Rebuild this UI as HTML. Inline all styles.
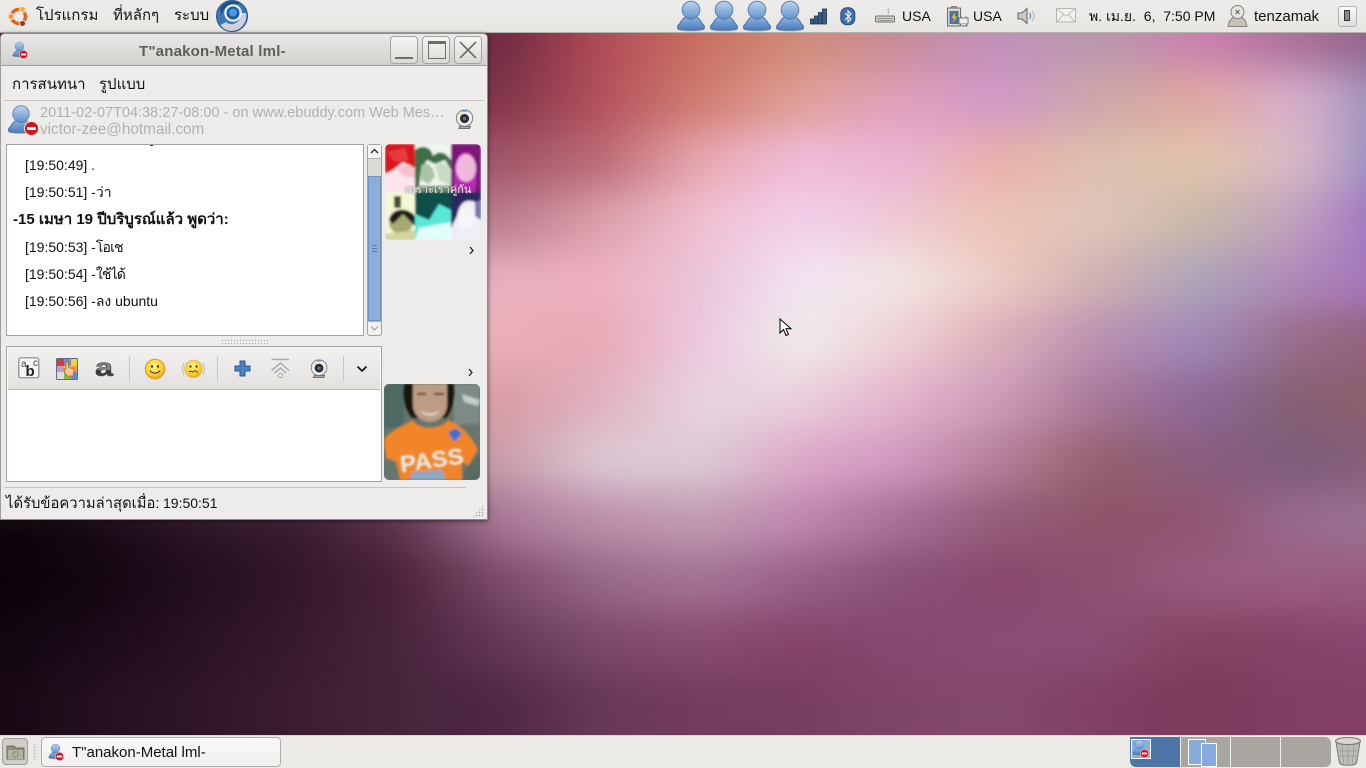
<!DOCTYPE html>
<html lang="th"><head><meta charset="utf-8"><title>T"anakon-Metal lml-</title>
<style>
html,body{margin:0;padding:0;width:1366px;height:768px;overflow:hidden;background:#8a4a70}
body{position:relative;font-family:"Liberation Sans","Noto Sans CJK JP","DejaVu Sans",sans-serif;color:#111;font-size:14px}
.a{position:absolute}
.t{position:absolute;white-space:pre;line-height:18px}
svg{position:absolute;display:block}
#wall{left:0;top:0;width:1366px;height:768px;overflow:hidden;contain:strict;background:linear-gradient(90deg,#180814 0px,#24101e,#301628,#3c1c30,#48243c,#4e2844,#683858,#743c5e,#783e60,#804668,#844a6c,#804064,#7c3a5c,#823e64,#843e64 1400px)}
#wi{position:absolute;left:-100px;top:-100px;width:1600px;height:868px;overflow:visible;filter:blur(20px)}
#wi div{position:absolute;left:0;width:1600px;height:60px}
#top{left:0;top:0;width:1366px;height:32px;background:linear-gradient(#edecea,#e8e6e3);border-bottom:1px solid #b5b2ad}
#bot{left:0;top:735px;width:1366px;height:33px;background:#eceae7;border-top:1px solid #d8d6d2;box-sizing:border-box}
#win{left:0;top:33px;width:488px;height:487px;background:#edeceb;border:1px solid #8d8b88;border-left-color:#a09e9b;box-sizing:border-box;border-radius:5px 5px 0 0;box-shadow:0 1px 5px rgba(0,0,0,.55)}
.btn{position:absolute;top:36px;width:26px;height:26px;border:1px solid #a5a29e;border-radius:4px;background:linear-gradient(#f6f5f4,#dcdad7);box-sizing:content-box}
.sep{position:absolute;width:1px;background:#c8c6c3;top:356px;height:25px}
</style></head><body>
<svg width="0" height="0" style="left:0;top:0">
<defs>
<filter id="s1" x="-10%" y="-10%" width="120%" height="120%"><feGaussianBlur stdDeviation="1"/></filter>
<linearGradient id="bu" x1="0" y1="0" x2="0" y2="1"><stop offset="0" stop-color="#bdd4ef"/><stop offset="1" stop-color="#6392cc"/></linearGradient>
<linearGradient id="bb" x1="0" y1="0" x2="0" y2="1"><stop offset="0" stop-color="#8fb2de"/><stop offset="1" stop-color="#4b7cb8"/></linearGradient>
<linearGradient id="ag" x1="0" y1="0" x2="0" y2="1"><stop offset="0" stop-color="#666"/><stop offset=".55" stop-color="#8a8a8a"/><stop offset=".6" stop-color="#333"/><stop offset="1" stop-color="#555"/></linearGradient>
<radialGradient id="sm" cx=".45" cy=".35" r=".7"><stop offset="0" stop-color="#fff27c"/><stop offset=".7" stop-color="#f6c92c"/><stop offset="1" stop-color="#ee8a1a"/></radialGradient>
<symbol id="buddy" viewBox="0 0 30 32">
<ellipse cx="15" cy="29.500" rx="13" ry="2" fill="#000" opacity=".18"/>
<path d="M10 17C7 18 5 21 3.500 24 1.500 25 1 27.500 2 29 6 30.500 24 30.500 28 29 29 27.500 28.500 25 26.500 24 25 21 23 18 20 17 17 20 13 20 10 17Z" fill="url(#bb)" stroke="#4a76ac" stroke-width="1"/>
<circle cx="15" cy="10" r="8.800" fill="url(#bu)" stroke="#5a84b6" stroke-width="1"/>
</symbol>
<symbol id="noent" viewBox="0 0 12 12"><circle cx="6" cy="6" r="5.600" fill="#d4151c" stroke="#fff" stroke-width=".6"/><rect x="2.500" y="4.800" width="7" height="2.400" fill="#fff"/></symbol>
<symbol id="cam" viewBox="0 0 22 24">
<path d="M5 20L4 22.500H16L17 20Z" fill="#a9a9a9" stroke="#555" stroke-width=".8"/>
<circle cx="10.500" cy="11" r="9" fill="#ededed" stroke="#777" stroke-width="1"/>
<path d="M7 2.500A9 9 0 0 1 14 2.500L13 4H8Z" fill="#6f97cc"/>
<circle cx="10.500" cy="11.500" r="5" fill="#2a2a2a"/><circle cx="10.500" cy="11.500" r="2" fill="#5a6f96"/><circle cx="6.500" cy="7" r="1" fill="#e0c030"/>
</symbol>
</defs>
</svg>

<div id="wall" class="a"><div id="wi">
<div style="top:0;height:170px;background:linear-gradient(90deg,#6e2a42 100px,#6e2a42,#6e2a42,#6e2a42,#6e2a42,#6e2a42,#b04a58,#c87060,#cf8c78,#c88c98,#c090bc,#b898a8,#cc80b0,#a87098,#8a6088 1500px)"></div>
<div style="top:170px;background:linear-gradient(90deg,#7e3449 100px,#7e3449,#7e3449,#7e3449,#7e3449,#7e3449,#b4505c,#d07c70,#e0a098,#e0a0bc,#d098c8,#cca8a8,#e0a8a0,#d8b0d0,#8c8cb0 1500px)"></div>
<div style="top:230px;background:linear-gradient(90deg,#a05468 100px,#a05468,#a05468,#a05468,#a05468,#a05468,#ba6a74,#e8a8b0,#f0bcd8,#eab4d4,#eab0a8,#dcc0b0,#e2c4ac,#d8b8c8,#8882c0 1500px)"></div>
<div style="top:290px;background:linear-gradient(90deg,#b87c8c 100px,#b87c8c,#b87c8c,#b87c8c,#b87c8c,#b87c8c,#dca0ac,#f0c0d0,#f2d0ec,#eec8d4,#ecc4b4,#e0c4bc,#c8b8a8,#c0a0c0,#9468c0 1500px)"></div>
<div style="top:350px;background:linear-gradient(90deg,#e8b0c0 100px,#e8b0c0,#e8b0c0,#e8b0c0,#e8b0c0,#e8b0c0,#eeb0c0,#eac4d8,#f2e4f2,#f2e6e4,#eccac4,#d0b0b0,#aca4b8,#b088b8,#a070c0 1500px)"></div>
<div style="top:410px;background:linear-gradient(90deg,#eab0b8 100px,#eab0b8,#eab0b8,#eab0b8,#eab0b8,#eab0b8,#e8a8b4,#ecc8e0,#f0ecec,#eed0d4,#dcaeb8,#b890b0,#a088b8,#986c88,#905c78 1500px)"></div>
<div style="top:470px;background:linear-gradient(90deg,#d89ca4 100px,#d89ca4,#d89ca4,#d89ca4,#d89ca4,#d89ca4,#e0b0c0,#e8d4e0,#ead0dc,#e4b4cc,#cc9cb8,#a87898,#8c6898,#846070,#90606c 1500px)"></div>
<div style="top:530px;background:linear-gradient(90deg,#c89ca8 100px,#c89ca8,#c89ca8,#c89ca8,#c89ca8,#c89ca8,#dccad4,#dcccd4,#dca8c8,#d09ac0,#b48098,#94606c,#8a5e80,#7c5a78,#8a6078 1500px)"></div>
<div style="top:590px;background:linear-gradient(90deg,#0a0408 100px,#180a16,#2e1626,#3a1c30,#5e3450,#aa7898,#bc90aa,#c09cb0,#c088b0,#a86e98,#945c78,#8e5468,#905470,#986c90,#9a7490 1500px)"></div>
<div style="top:650px;background:linear-gradient(90deg,#0a0208 100px,#140610,#220e20,#34162c,#4a2238,#7c4a6a,#986888,#a47494,#986088,#8a5078,#88486c,#8c5070,#985c80,#9a5e80,#985c80 1500px)"></div>
<div style="top:710px;background:linear-gradient(90deg,#100610 100px,#1c0a18,#2a1222,#381a2e,#48243c,#643858,#7c4a6a,#8a4e72,#844468,#864870,#8a4c74,#8a4e74,#84425e,#88426a,#8a4870 1500px)"></div>
<div style="top:770px;height:98px;background:linear-gradient(90deg,#180814 100px,#24101e,#301628,#3c1c30,#48243c,#4e2844,#683858,#743c5e,#783e60,#804668,#844a6c,#804064,#7c3a5c,#823e64,#843e64 1500px)"></div>
</div></div>

<div id="top" class="a"></div>
<svg style="left:7px;top:5px" width="23" height="23" viewBox="0 0 23 23"><circle cx="11.500" cy="11.500" r="7" fill="none" stroke="#dc6424" stroke-width="3.400"/><circle cx="4" cy="11.500" r="3" fill="#ee9a3a" stroke="#edecea" stroke-width="1"/><circle cx="15.500" cy="4.500" r="3" fill="#f0a83a" stroke="#edecea" stroke-width="1"/><circle cx="15.500" cy="18.500" r="3" fill="#b02a1c" stroke="#edecea" stroke-width="1"/></svg>
<span class="t" style="left:36px;top:7px;font-size:15px">โปรแกรม</span>
<span class="t" style="left:113px;top:7px;font-size:15px">ที่หลักๆ</span>
<span class="t" style="left:174px;top:7px;font-size:15px">ระบบ</span>
<svg style="left:216px;top:0" width="32" height="32" viewBox="0 0 32 32"><circle cx="16" cy="16" r="15.500" fill="#3a78b8" stroke="#24548c"/><path d="M4 9A14 14 0 0 1 24 3.500L17 5C11 5 6 9 6 16Z" fill="#1f4f88"/><path d="M30 13A15 15 0 0 1 16 31C11 31 7 29 4.500 25L10 22C14 26 24 25 25.500 13Z" fill="#cfd2d6"/><circle cx="17" cy="13" r="8.800" fill="#e8eff6"/><circle cx="17" cy="13" r="6.500" fill="#1f5a9c"/><circle cx="17" cy="12.500" r="4" fill="#3f9be6"/></svg>

<svg style="left:676px;top:0" width="30" height="32"><use href="#buddy" width="30" height="32"/></svg>
<svg style="left:709px;top:0" width="30" height="32"><use href="#buddy" width="30" height="32"/></svg>
<svg style="left:742px;top:0" width="30" height="32"><use href="#buddy" width="30" height="32"/></svg>
<svg style="left:775px;top:0" width="30" height="32"><use href="#buddy" width="30" height="32"/></svg>
<svg style="left:810px;top:8px" width="18" height="17"><g fill="#3b5f8c" stroke="#1c2c48" stroke-width=".8"><rect x=".5" y="11" width="3" height="5"/><rect x="4.500" y="8" width="3" height="8"/><rect x="8.500" y="4.500" width="3" height="11.500"/><rect x="12.500" y="1" width="4" height="15"/></g></svg>
<svg style="left:840px;top:7px" width="16" height="19"><rect x=".8" y=".8" width="14" height="17" rx="6" fill="#3f6faa" stroke="#2a4e80"/><path d="M5 6L11 12 8 15V4L11 7 5 13" fill="none" stroke="#fff" stroke-width="1"/></svg>
<svg style="left:875px;top:8px" width="20" height="16"><path d="M13 6C15 3 11 2 14 1" fill="none" stroke="#aaa"/><rect x=".5" y="8" width="19" height="6" rx="1" fill="#cfcdc9" stroke="#77746f"/><path d="M2 10.500H18M3 12.500H17" stroke="#8a8884" stroke-width=".8"/></svg>
<span class="t" style="left:902px;top:7px;font-size:14px">USA</span>
<svg style="left:946px;top:5px" width="24" height="23"><rect x="1.500" y="3" width="13" height="18" fill="#d9d8d5" stroke="#6d6b68"/><rect x="5" y="1" width="6" height="2" fill="#8c8a87"/><rect x="3.500" y="6" width="9" height="13" fill="#4d72a0"/><path d="M9 7L5.500 13H8L7 18 11 11.500H8.500Z" fill="#f2c13a"/><rect x="13" y="13" width="9" height="6" fill="#f1f0ee" stroke="#777"/><path d="M15 19L14 21H21L20 19M15 13V11M20 13V11" stroke="#777" fill="#ddd"/></svg>
<span class="t" style="left:973px;top:7px;font-size:14px">USA</span>
<svg style="left:1017px;top:7px" width="20" height="18"><path d="M1 6H5L10 1.500V16.500L5 12H1Z" fill="#c9c8c4" stroke="#666"/><path d="M12.500 6C14 8 14 10 12.500 12" fill="none" stroke="#6688b0" stroke-width="1.200"/><path d="M15 4C17.500 7 17.500 11 15 14" fill="none" stroke="#a7bad0" stroke-width="1.200"/></svg>
<svg style="left:1056px;top:8px" width="21" height="15"><rect x=".5" y=".5" width="19" height="13.500" fill="#f3f2f0" stroke="#b5b3af"/><path d="M1 1L10 8 19 1M1 14L7.500 6.500M19 14L12.500 6.500" fill="none" stroke="#bdbbb7"/></svg>
<span class="t" style="left:1089px;top:7px;font-size:14px">พ. เม.ย.  6,  7:50 PM</span>
<svg style="left:1227px;top:4px" width="22" height="24"><path d="M7 13C3 15 1.500 18 1 22.500H20C19.500 18 18 15 14 13Z" fill="#c4c1ba" stroke="#8a8780"/><circle cx="10.500" cy="8" r="6.500" fill="#e6e4e0" stroke="#85827c"/><path d="M8.500 6L12.500 10M12.500 6L8.500 10" stroke="#5d5b57" stroke-width="1"/></svg>
<span class="t" style="left:1254px;top:8px;font-size:15px">tenzamak</span>
<div class="a" style="left:1338px;top:6px;width:17px;height:19px;border:1px solid #b5b3af;border-radius:3px;background:linear-gradient(#fbfbfa,#dedcd9)"></div>
<div class="a" style="left:1344px;top:10px;width:6px;height:11px;border:1px solid #333;background:#8c8a86;box-sizing:border-box"></div>

<div id="win" class="a"></div>
<div class="a" style="left:1px;top:34px;width:486px;height:31px;background:linear-gradient(#ebe9e7,#d3d1ce);border-radius:4px 4px 0 0;border-bottom:1px solid #a09e9a"></div>
<svg style="left:12px;top:41px" width="18" height="19"><use href="#buddy" width="15" height="17"/><use href="#noent" x="7" y="9" width="9" height="9"/></svg>
<span class="t" style="left:139px;top:43px;font-size:15px;letter-spacing:.2px;font-weight:bold;color:#5f5d5a">T"anakon-Metal lml-</span>
<div class="btn" style="left:390px"></div><div class="a" style="left:395px;top:57px;width:18px;height:2px;background:#6f6d6a"></div>
<div class="btn" style="left:422px"></div><div class="a" style="left:428px;top:41px;width:18px;height:18px;border:1.500px solid #6f6d6a;border-top-width:3px;box-sizing:border-box"></div>
<div class="btn" style="left:454px"></div><svg style="left:459px;top:41px" width="18" height="18"><path d="M1 1L17 17M17 1L1 17" stroke="#6f6d6a" stroke-width="1.600"/></svg>

<span class="t" style="left:12px;top:76px;font-size:15px">การสนทนา</span>
<span class="t" style="left:99px;top:76px;font-size:15px">รูปแบบ</span>
<div class="a" style="left:4px;top:100px;width:480px;height:1px;background:#c6c4c1"></div>
<svg style="left:7px;top:104px" width="32" height="34"><use href="#buddy" width="28" height="31"/><use href="#noent" x="17" y="17" width="15" height="15"/></svg>
<span class="t" style="left:40px;top:104px;font-size:14.500px;color:#b3b1ae">2011-02-07T04:38:27-08:00 - on www.ebuddy.com Web Mes…</span>
<span class="t" style="left:40px;top:121px;font-size:15.300px;color:#b3b1ae">victor-zee@hotmail.com</span>
<svg style="left:455px;top:108px" width="22" height="24"><use href="#cam" width="20" height="22"/></svg>

<div class="a" style="left:6px;top:144px;width:358px;height:192px;background:#fff;border:1px solid #a5a39f;box-sizing:border-box;overflow:hidden"></div>
<div class="a" style="left:150px;top:145px;width:3px;height:1px;background:#333"></div>
<span class="t" style="left:25px;top:156px;font-size:14px">[19:50:49] .</span>
<span class="t" style="left:25px;top:183px;font-size:14px">[19:50:51] -ว่า</span>
<span class="t" style="left:13px;top:211px;font-size:15px;font-weight:bold">-15 เมษา 19 ปีบริบูรณ์แล้ว พูดว่า:</span>
<span class="t" style="left:25px;top:238px;font-size:14px">[19:50:53] -<span style="letter-spacing:-.8px">โอเช</span></span>
<span class="t" style="left:25px;top:265px;font-size:14px">[19:50:54] -<span style="letter-spacing:-.8px">ใช้ได้</span></span>
<span class="t" style="left:25px;top:292px;font-size:14px">[19:50:56] -ลง ubuntu</span>

<div class="a" style="left:367px;top:144px;width:15px;height:192px;background:#dcdad7;border:1px solid #a5a39f;border-radius:3px;box-sizing:border-box"></div>
<div class="a" style="left:368px;top:145px;width:13px;height:13px;background:#f6f5f4;border-bottom:1px solid #b4b2af"></div>
<svg style="left:370px;top:148px" width="9" height="6"><path d="M1 5L4.500 1.500 8 5" fill="none" stroke="#222" stroke-width="1.300"/></svg>
<div class="a" style="left:368px;top:176px;width:13px;height:145px;background:#8aaed8;border:1px solid #6f93c2;box-sizing:border-box"></div>
<div class="a" style="left:372px;top:245px;width:5px;height:7px;background:repeating-linear-gradient(#5a7ba8 0 1px,transparent 1px 3px)"></div>
<div class="a" style="left:368px;top:321px;width:13px;height:14px;background:#f2f1ef;border-top:1px solid #b4b2af;box-sizing:border-box;border-radius:0 0 3px 3px"></div>
<svg style="left:370px;top:325px" width="9" height="6"><path d="M1 1.500L4.500 5 8 1.500" fill="none" stroke="#a5a39f" stroke-width="1.200"/></svg>

<svg style="left:385px;top:144px;overflow:hidden" width="96" height="96" viewBox="0 0 96 96"><defs><clipPath id="c1"><rect width="96" height="96" rx="5"/></clipPath></defs>
<g clip-path="url(#c1)"><g filter="url(#s1)">
<rect width="30" height="48" fill="#fde4ea"/><path d="M0 0H30V24L18 18 8 26 0 30Z" fill="#d8141c"/><path d="M2 8L20 4 24 16 10 18Z" fill="#e83a40"/><path d="M12 24L24 20 30 26V34L18 32Z" fill="#f8c0cc"/>
<rect x="30" width="36" height="48" fill="#f0f4ec"/><path d="M30 6C38 0 46 3 48 12 54 6 60 8 66 16V26L60 16 50 20 42 16 36 26 34 44H30Z" fill="#3e6e44"/><path d="M36 22C42 16 48 22 50 32L44 40 36 36Z" fill="#a8c4a4"/><path d="M50 22C56 16 64 20 66 30V42L54 36Z" fill="#c8dcc4"/><path d="M32 42H66V48H32Z" fill="#6e9470"/>
<rect x="66" width="30" height="48" fill="#b82cb0"/><path d="M66 0H96V48H90C94 26 90 8 80 8 70 8 68 30 70 48H66Z" fill="#7c187a"/><ellipse cx="81" cy="24" rx="10" ry="14" fill="#f0b8dc"/>
<rect y="48" width="30" height="48" fill="#f6f8d4"/><ellipse cx="16" cy="78" rx="12" ry="12" fill="#a8a874"/><path d="M4 76C6 64 22 62 30 72V82L18 70 8 80Z" fill="#1e1e14"/><rect x="9" y="52" width="7" height="12" fill="#4a4a38"/><path d="M0 90L30 86V96H0Z" fill="#d4d49c"/>
<rect x="30" y="48" width="36" height="48" fill="#58e8d8"/><path d="M30 48H66V66L54 60 44 76 30 70Z" fill="#0a5048"/><path d="M34 84L66 78V96H30Z" fill="#e0fff8"/>
<rect x="66" y="48" width="30" height="48" fill="#efeef6"/><path d="M66 48H96V66L90 58C80 54 74 60 72 72L66 84Z" fill="#2a2860"/><ellipse cx="82" cy="74" rx="9" ry="11" fill="#f8f4fa"/><path d="M90 58L96 56V76L90 72Z" fill="#7c74b0"/>
</g></g></svg>
<span class="t" style="left:405px;top:183px;font-size:11px;color:#eaeaea;line-height:14px;text-shadow:0 0 2px #555">เพราะเราคู่กัน</span>
<svg style="left:468px;top:246px" width="7" height="9"><path d="M2 1L5 4.500 2 8" fill="none" stroke="#222" stroke-width="1.300"/></svg>

<div class="a" style="left:221px;top:339px;width:47px;height:5px;background:radial-gradient(circle,#a8a6a3 .6px,transparent .8px) 0 0/3px 3px"></div>

<div class="a" style="left:6px;top:346px;width:376px;height:136px;background:#fff;border:1px solid #a5a39f;box-sizing:border-box"></div>
<div class="a" style="left:8px;top:347px;width:372px;height:43px;background:linear-gradient(#f2f1f0,#e4e2df);border-bottom:1px solid #b8b6b3;box-sizing:border-box"></div>
<svg style="left:18px;top:357px" width="23" height="23"><rect x=".8" y=".8" width="20" height="20" rx="2" fill="#f6f6f4" stroke="#8b8986" stroke-width="1.200"/><text x="3" y="10" font-size="10" font-family="Liberation Sans" fill="#444">a</text><text x="7.500" y="19" font-size="15" font-weight="bold" font-family="Liberation Sans" fill="#222">b</text><text x="15" y="9" font-size="10" font-family="Liberation Sans" fill="#444">c</text></svg>
<svg style="left:56px;top:358px" width="22" height="22"><rect x=".5" y=".5" width="21" height="21" rx="1" fill="#eee" stroke="#5a6d8a"/><rect x="1" y="1" width="7" height="7" fill="#d83a3a"/><rect x="8" y="1" width="7" height="7" fill="#6c93c8"/><rect x="15" y="1" width="6" height="7" fill="#f2d23a"/><rect x="1" y="8" width="7" height="6" fill="#c29ac2"/><rect x="8" y="8" width="7" height="6" fill="#e8c060"/><rect x="15" y="8" width="6" height="6" fill="#f09a3a"/><rect x="1" y="14" width="7" height="7" fill="#ddd"/><rect x="8" y="14" width="7" height="7" fill="#86b84a"/><rect x="15" y="14" width="6" height="7" fill="#5c8ccc"/><path d="M10 4.500V11L8 10.500 9 15 11 18H17L18 11 12.500 9.500V4.500Z" fill="#f4c898" stroke="#c06a28" stroke-width=".8"/></svg>
<svg style="left:95px;top:358px" width="20" height="22"><text x="0" y="18" font-size="25" font-weight="bold" font-family="Liberation Sans" textLength="18" lengthAdjust="spacingAndGlyphs" fill="url(#ag)" stroke="#444" stroke-width=".6">a</text></svg>
<div class="sep" style="left:129px"></div>
<svg style="left:144px;top:358px" width="22" height="22"><circle cx="11" cy="11" r="9.700" fill="url(#sm)" stroke="#ee8f2a"/><circle cx="8" cy="8.500" r="1.200" fill="#333"/><circle cx="14" cy="8.500" r="1.200" fill="#333"/><path d="M6 12.500C8 16 14 16 16 12.500" fill="none" stroke="#333" stroke-width="1"/></svg>
<svg style="left:180px;top:358px" width="27" height="22"><g fill="none" stroke="#bbb"><path d="M4 5C2 9 2 13 4 17M7 7C6 10 6 12 7 15M23 5C25 9 25 13 23 17M20 7C21 10 21 12 20 15"/></g><circle cx="13.500" cy="11" r="8.800" fill="url(#sm)" stroke="#e8c070"/><circle cx="10.500" cy="8.500" r="1.100" fill="#333"/><circle cx="16.500" cy="8.500" r="1.100" fill="#333"/><path d="M9 14C11 11.500 12.500 15.500 14 13.500 15.500 11.500 17 14 18 15" fill="none" stroke="#333" stroke-width=".9"/></svg>
<div class="sep" style="left:217px"></div>
<svg style="left:234px;top:360px" width="17" height="17"><path d="M6 1H11V6H16V11H11V16H6V11H1V6H6Z" fill="#4a82c4" stroke="#2a5a98"/></svg>
<svg style="left:270px;top:358px" width="21" height="21"><path d="M1.500 1.500H19" stroke="#aaa" stroke-width="1.600"/><path d="M1.500 12.500L10.500 5 19 12.500M4.500 15L10.500 10 16 15" fill="none" stroke="#aaa" stroke-width="1.500"/><circle cx="10.500" cy="17.500" r="2" fill="#fff" stroke="#999"/></svg>
<svg style="left:309px;top:358px" width="22" height="22"><use href="#cam" width="21" height="21"/></svg>
<div class="sep" style="left:343px"></div>
<svg style="left:356px;top:365px" width="12" height="8"><path d="M1.500 1.500L6 6 10.500 1.500" fill="none" stroke="#111" stroke-width="1.600"/></svg>
<svg style="left:467px;top:368px" width="7" height="9"><path d="M2 1L5 4.500 2 8" fill="none" stroke="#222" stroke-width="1.300"/></svg>

<svg style="left:384px;top:384px;overflow:hidden" width="96" height="96" viewBox="0 0 96 96"><defs><clipPath id="c2"><rect width="96" height="96" rx="5"/></clipPath></defs>
<g clip-path="url(#c2)"><rect width="96" height="96" fill="#66766e"/><g filter="url(#s1)"><rect x="70" width="26" height="40" fill="#7e8a86"/><path d="M78 10L96 16 94 22 80 18Z" fill="#c2ccca"/><rect width="20" height="44" fill="#4e6a64"/>
<path d="M20 0C18 12 20 24 28 34L62 34C70 24 72 10 70 0Z" fill="#12140f"/><path d="M29 0H63V22C62 32 54 38 46 38 38 38 30 32 29 22Z" fill="#bc9c84"/><path d="M36 26C42 31 50 31 56 26 52 33 40 33 36 26Z" fill="#f0ecdf"/><path d="M33 10H42M50 10H60" stroke="#3a2a20" stroke-width="2"/>
<path d="M0 56C6 46 20 42 28 36 36 46 56 46 64 36 74 40 86 48 94 66L84 82 78 78 78 96H16L12 78 2 74Z" fill="#f2842c"/><path d="M84 82L96 70V96H78Z" fill="#5a6a62"/>
<path d="M64 48L72 44 78 50 70 58Z" fill="#3e72c8"/><path d="M28 88L58 86 62 96H26Z" fill="#8ea8c6"/></g>
<text x="16" y="84" font-size="23" font-weight="bold" font-family="Liberation Sans" fill="#eef0f2" textLength="64" lengthAdjust="spacingAndGlyphs" transform="rotate(-8 48 78)" filter="url(#s1)">PASS</text></g></svg>

<div class="a" style="left:4px;top:487px;width:462px;height:1px;background:#c6c4c1"></div>
<span class="t" style="left:6px;top:495px;font-size:14.800px">ได้รับข้อความล่าสุดเมื่อ:</span>
<span class="t" style="left:163px;top:494px;font-size:14px">19:50:51</span>
<div class="a" style="left:472px;top:505px;width:12px;height:12px;background:radial-gradient(circle,#a8a6a3 .7px,transparent .9px) 0 0/3px 3px;clip-path:polygon(100% 0,100% 100%,0 100%)"></div>

<svg style="left:779px;top:318px" width="14" height="20"><path d="M1 1V15L4.500 11.500 7 17.500 9.500 16.500 7 10.800H12Z" fill="#fff" stroke="#000" stroke-width="1"/></svg>

<div id="bot" class="a"></div>
<div class="a" style="left:2px;top:738px;width:26px;height:27px;background:#d0cec8;border:1px solid #a09e98;border-radius:4px;box-sizing:border-box"></div>
<svg style="left:6px;top:743px" width="20" height="18"><path d="M1 3H8L10 5H18V16H1Z" fill="#8f8e76" stroke="#6e6d5a"/><rect x="2" y="7" width="15" height="9" fill="#b3b29c"/><rect x="7" y="9" width="5" height="5" fill="none" stroke="#6e6d5a" stroke-dasharray="1 1"/></svg>
<div class="a" style="left:33px;top:743px;width:4px;height:18px;background:radial-gradient(circle,#b5b3af .7px,transparent .9px) 0 0/3px 3px"></div>
<div class="a" style="left:41px;top:737px;width:240px;height:30px;background:linear-gradient(#faf9f9,#f1f0ee);border:1px solid #b0aeaa;border-radius:4px;box-sizing:border-box"></div>
<svg style="left:48px;top:743px" width="18" height="19"><use href="#buddy" width="15" height="17"/><use href="#noent" x="7" y="9" width="9" height="9"/></svg>
<span class="t" style="left:72px;top:744px;font-size:15px">T"anakon-Metal lml-</span>

<div class="a" style="left:1130px;top:737px;width:201px;height:30px;background:#a9a5a0;border-radius:0 6px 6px 6px;overflow:hidden"><div class="a" style="left:0;top:0;width:50px;height:30px;background:#4d75a8"></div></div>
<div class="a" style="left:1180px;top:737px;width:1px;height:30px;background:#eee"></div>
<div class="a" style="left:1230px;top:737px;width:1px;height:30px;background:#eee"></div>
<div class="a" style="left:1280px;top:737px;width:1px;height:30px;background:#eee"></div>
<div class="a" style="left:1131px;top:739px;width:18px;height:18px;background:#8aaedb;border:1px solid #fff"></div>
<svg style="left:1132px;top:739px" width="18" height="19"><use href="#buddy" width="15" height="17"/><use href="#noent" x="8" y="10" width="9" height="9"/></svg>
<div class="a" style="left:1188px;top:739px;width:16px;height:24px;background:#85aadb;border:1px solid #fff"></div>
<div class="a" style="left:1201px;top:743px;width:14px;height:22px;background:#85aadb;border:1px solid #fff"></div>
<svg style="left:1334px;top:736px" width="28" height="31"><ellipse cx="14" cy="5" rx="12.500" ry="3.500" fill="#d8d6d2" stroke="#777"/><path d="M2 6L5.500 27C8 30 20 30 22.500 27L26 6C22 9.500 6 9.500 2 6Z" fill="#bdbbb7" stroke="#7a7874"/><path d="M8 10L9.500 27M14 11V28M20 10L18.500 27M5 15H23M6 20H22" stroke="#8f8d89" stroke-width=".7" opacity=".8"/></svg>
</body></html>
